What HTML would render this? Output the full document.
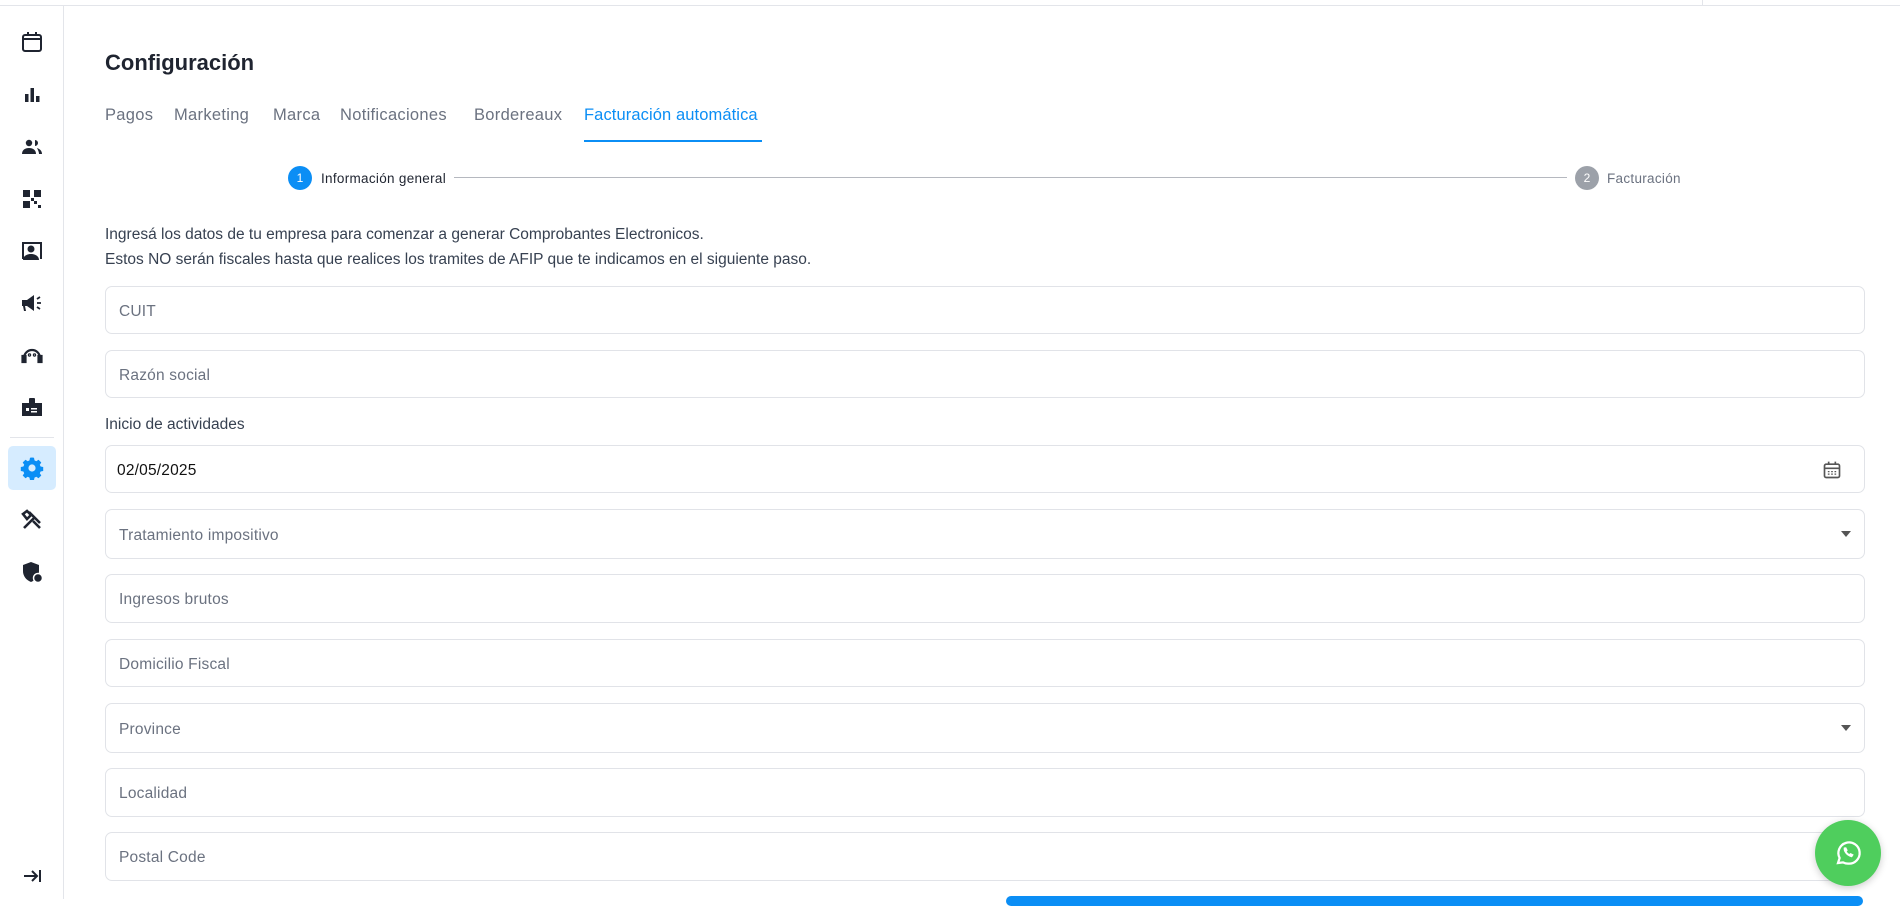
<!DOCTYPE html>
<html><head><meta charset="utf-8"><style>
*{margin:0;padding:0;box-sizing:border-box}
body{width:1900px;height:899px;overflow:hidden;background:#fff;font-family:"Liberation Sans",sans-serif;position:relative;color:#1f2937}
.topline{position:absolute;left:0;top:5px;width:1900px;height:1px;background:#e3e5ea}
.topdiv{position:absolute;left:1702px;top:0;width:1px;height:5px;background:#e3e5ea}
.side{position:absolute;left:0;top:6px;width:64px;height:893px;border-right:1px solid #e3e5ea}
.ic{position:absolute;left:20px;width:24px;height:24px}
.active{position:absolute;left:8px;top:440px;width:48px;height:44px;background:#d6ecff;border-radius:5px}
.sdiv{position:absolute;left:10px;top:431px;width:44px;height:1px;background:#e3e5ea}
.t{position:absolute;white-space:nowrap}
.h1{left:105px;top:50px;font-size:22px;font-weight:bold;color:#1f2430}
.tab{top:106px;font-size:16.5px;color:#6b7280;letter-spacing:.3px}
.field{position:absolute;left:105px;width:1760px;border:1px solid #e1e3e8;border-radius:7px;font-size:15.5px;color:#6b7280;padding-left:13px;padding-top:3px;display:flex;align-items:center;letter-spacing:.2px}
.caret{position:absolute;right:13px;top:50%;margin-top:-3px;border-left:5px solid transparent;border-right:5px solid transparent;border-top:6px solid #555}
</style></head><body>
<div class="topline"></div><div class="topdiv"></div>
<div class="side">
<svg class="ic" style="top:24px" viewBox="0 0 24 24" fill="none" stroke="#1f2430" stroke-width="2"><rect x="3" y="5" width="18" height="16" rx="2"/><path d="M3 9h18M8 2v4M16 2v4"/></svg>
<svg class="ic" style="top:77px" viewBox="0 0 24 24" fill="#1f2430"><rect x="5" y="11" width="3.5" height="8"/><rect x="10.5" y="5" width="3.5" height="14"/><rect x="16" y="13" width="3.5" height="6"/></svg>
<svg class="ic" style="top:129px" viewBox="0 0 24 24" fill="#1f2430"><circle cx="9" cy="8" r="3.2"/><path d="M2 19c0-4 3-6 7-6s7 2 7 6z"/><path d="M15 5a3 3 0 010 6zM17 13c3 1 5 3 5 6h-3c0-2-1-4-2-6z"/></svg>
<svg class="ic" style="top:181px" viewBox="0 0 24 24" fill="#1f2430"><rect x="3" y="3" width="7" height="7"/><rect x="14" y="3" width="7" height="7"/><rect x="3" y="14" width="7" height="7"/><rect x="14" y="14" width="3" height="3"/><rect x="18" y="18" width="3" height="3"/><rect x="11" y="11" width="3" height="3"/></svg>
<svg class="ic" style="top:233px" viewBox="0 0 24 24" fill="#1f2430"><path d="M2 3h20v17h-2V5H4v15H2z"/><circle cx="11" cy="10" r="3.5"/><path d="M3 21c0-4 4-6 8-6s8 2 8 6z"/></svg>
<svg class="ic" style="top:285px" viewBox="0 0 24 24" fill="#1f2430"><path d="M2 9h5l7-5v16l-7-5H5l1 5H4l-1-5H2z"/><path d="M17 8l3-2M17 12h4M17 16l3 2" stroke="#1f2430" stroke-width="1.8"/></svg>
<svg class="ic" style="top:337px" viewBox="0 0 24 24" fill="none" stroke="#1f2430" stroke-width="2.2"><path d="M4 15a8 8 0 0116 0"/><rect x="2.5" y="13" width="3" height="6" fill="#1f2430"/><rect x="18.5" y="13" width="3" height="6" fill="#1f2430"/><circle cx="9.5" cy="12" r=".6"/><circle cx="14.5" cy="12" r=".6"/></svg>
<svg class="ic" style="top:389px" viewBox="0 0 24 24" fill="#1f2430"><path d="M2 8h20v13H2z"/><rect x="9" y="3" width="6" height="7" rx="1"/><rect x="6" y="13" width="3" height="3" fill="#fff"/><rect x="11" y="13" width="6" height="1.5" fill="#fff"/><rect x="11" y="16" width="6" height="1.5" fill="#fff"/></svg>
<div class="sdiv"></div>
<div class="active"></div>
<svg class="ic" style="top:450px" viewBox="0 0 24 24" fill="#0b8ef5"><path d="M12 1.5l2 .3.5 2.6 1.8.8 2.2-1.5 2.8 2.8-1.5 2.2.8 1.8 2.6.5v4l-2.6.5-.8 1.8 1.5 2.2-2.8 2.8-2.2-1.5-1.8.8-.5 2.6h-4l-.5-2.6-1.8-.8-2.2 1.5-2.8-2.8 1.5-2.2-.8-1.8-2.6-.5v-4l2.6-.5.8-1.8-1.5-2.2 2.8-2.8 2.2 1.5 1.8-.8.5-2.6z"/><circle cx="12" cy="12" r="3.6" fill="#d6ecff"/></svg>
<svg class="ic" style="top:502px" viewBox="0 0 24 24" fill="none" stroke="#1f2430" stroke-width="2.6"><path d="M4 20L15 9M9 4l11 11M3 6l4-3 4 4-4 4z"/><path d="M13 13l7 7"/></svg>
<svg class="ic" style="top:554px" viewBox="0 0 24 24" fill="#1f2430"><path d="M11 2l8 3v6c0 5-3 9-8 11-5-2-8-6-8-11V5z"/><circle cx="18" cy="18" r="4.5" fill="#1f2430" stroke="#fff" stroke-width="1.5"/></svg>
<svg class="ic" style="top:858px" viewBox="0 0 24 24" fill="none" stroke="#1f2430" stroke-width="2"><path d="M4 12h12M12 7l5 5-5 5M20 6v12"/></svg>
</div>

<div class="t h1">Configuración</div>
<div class="t tab" style="left:105px">Pagos</div>
<div class="t tab" style="left:174px">Marketing</div>
<div class="t tab" style="left:273px">Marca</div>
<div class="t tab" style="left:340px">Notificaciones</div>
<div class="t tab" style="left:474px">Bordereaux</div>
<div class="t tab" style="left:584px;color:#0b8ef5;letter-spacing:.1px">Facturación automática</div>
<div style="position:absolute;left:584px;top:140px;width:178px;height:2px;background:#0b8ef5"></div>

<div style="position:absolute;left:288px;top:166px;width:24px;height:24px;border-radius:50%;background:#0b8ef5;color:#fff;font-size:12px;display:flex;align-items:center;justify-content:center">1</div>
<div class="t" style="left:321px;top:171px;font-size:13.5px;color:#1f2430;letter-spacing:.3px">Información general</div>
<div style="position:absolute;left:454px;top:177px;width:1113px;height:1px;background:#b5b8bf"></div>
<div style="position:absolute;left:1575px;top:166px;width:24px;height:24px;border-radius:50%;background:#9ca1a9;color:#fff;font-size:12px;display:flex;align-items:center;justify-content:center">2</div>
<div class="t" style="left:1607px;top:171px;font-size:13.5px;color:#6b7280;letter-spacing:.3px">Facturación</div>

<div class="t" style="left:105px;top:226px;font-size:15.5px;color:#374151">Ingresá los datos de tu empresa para comenzar a generar Comprobantes Electronicos.</div>
<div class="t" style="left:105px;top:251px;font-size:15.5px;color:#374151">Estos NO serán fiscales hasta que realices los tramites de AFIP que te indicamos en el siguiente paso.</div>

<div class="field" style="top:286px;height:48px">CUIT</div>
<div class="field" style="top:350px;height:48px">Razón social</div>
<div class="t" style="left:105px;top:416px;font-size:15.5px;color:#374151">Inicio de actividades</div>
<div class="field" style="top:445px;height:48px;color:#111;padding-left:11px">02/05/2025
<svg style="position:absolute;right:22px;top:14px" width="20" height="20" viewBox="0 0 24 24" fill="none" stroke="#555" stroke-width="2"><rect x="3" y="5" width="18" height="16" rx="2"/><path d="M3 10h18M8 2v4M16 2v4"/><path d="M7 14h2M11 14h2M15 14h2M7 17h2M11 17h2M15 17h2" stroke-width="1.5"/></svg></div>
<div class="field" style="top:509px;height:50px">Tratamiento impositivo<div class="caret"></div></div>
<div class="field" style="top:574px;height:49px">Ingresos brutos</div>
<div class="field" style="top:639px;height:48px">Domicilio Fiscal</div>
<div class="field" style="top:703px;height:50px">Province<div class="caret"></div></div>
<div class="field" style="top:768px;height:49px">Localidad</div>
<div class="field" style="top:832px;height:49px">Postal Code</div>
<div style="position:absolute;left:1006px;top:896px;width:857px;height:10px;background:#0b8ef5;border-radius:6px"></div>

<div style="position:absolute;left:1815px;top:820px;width:66px;height:66px;border-radius:50%;background:#4fce5d;box-shadow:0 2px 8px rgba(0,0,0,.2);display:flex;align-items:center;justify-content:center">
<svg width="30" height="30" viewBox="0 0 24 24" fill="none" stroke="#fff" stroke-width="1.8"><path d="M4 20l1.3-4A8.5 8.5 0 1112 20.5a8.5 8.5 0 01-4-1z"/><path d="M9 8c-.5 2 1.5 6 6 7l1-1.5-2-1-1 .8c-1-.5-2-1.5-2.5-2.5l.8-1-1-2z" fill="#fff" stroke-width=".8"/></svg></div>
</body></html>
